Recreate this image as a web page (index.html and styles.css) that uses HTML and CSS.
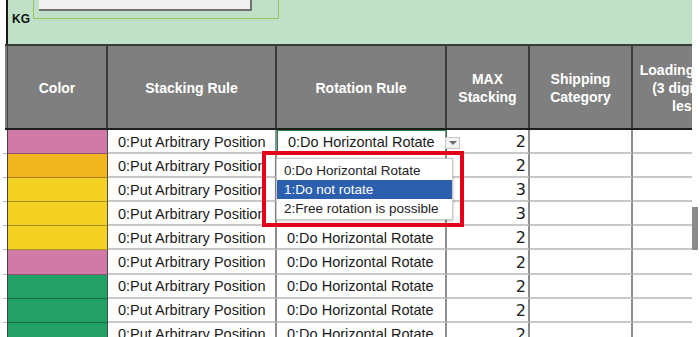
FILE: index.html
```html
<!DOCTYPE html>
<html lang="en">
  <head>
    <meta charset="UTF-8" />
    <meta name="viewport" content="width=device-width, initial-scale=1.0" />
    <title>Packing master</title>
    <link rel="stylesheet" href="styles.css">
  </head>
  <body>
    <div class="sheet">
      <!-- Верхняя строка с единицей веса -->
      <div class="band">
        <span class="unit">KG</span>
        <div class="frame"><div class="frame-inner"></div></div>
      </div>

      <!-- Заголовок таблицы -->
      <div class="row head">
        <div class="gut"></div>
        <div class="th">Color</div>
        <div class="th">Stacking Rule</div>
        <div class="th">Rotation Rule</div>
        <div class="th">MAX<br>Stacking</div>
        <div class="th">Shipping<br>Category</div>
        <div class="th">Loading Order<br>(3 digits or<br>less)</div>
      </div>

      <!-- Строки -->
      <div class="row body">
        <div class="gut"></div>
        <div class="swatch pink"></div>
        <div class="txt">0:Put Arbitrary Position</div>
        <div class="txt sel">
          0:Do Horizontal Rotate
          <span class="drop-btn"></span>
          <div class="callout"></div>
          <ul class="menu">
            <li>0:Do Horizontal Rotate</li>
            <li class="on">1:Do not rotate</li>
            <li>2:Free rotation is possible</li>
          </ul>
        </div>
        <div class="num">2</div>
        <div></div>
        <div></div>
      </div>
      <div class="row body">
        <div class="gut"></div>
        <div class="swatch orange"></div>
        <div class="txt">0:Put Arbitrary Position</div>
        <div class="txt">0:Do Horizontal Rotate</div>
        <div class="num">2</div>
        <div></div>
        <div></div>
      </div>
      <div class="row body">
        <div class="gut"></div>
        <div class="swatch yellow"></div>
        <div class="txt">0:Put Arbitrary Position</div>
        <div class="txt">0:Do Horizontal Rotate</div>
        <div class="num">3</div>
        <div></div>
        <div></div>
      </div>
      <div class="row body">
        <div class="gut"></div>
        <div class="swatch yellow"></div>
        <div class="txt">0:Put Arbitrary Position</div>
        <div class="txt">0:Do Horizontal Rotate</div>
        <div class="num">3</div>
        <div></div>
        <div></div>
      </div>
      <div class="row body">
        <div class="gut"></div>
        <div class="swatch yellow"></div>
        <div class="txt">0:Put Arbitrary Position</div>
        <div class="txt">0:Do Horizontal Rotate</div>
        <div class="num">2</div>
        <div></div>
        <div></div>
      </div>
      <div class="row body">
        <div class="gut"></div>
        <div class="swatch pink"></div>
        <div class="txt">0:Put Arbitrary Position</div>
        <div class="txt">0:Do Horizontal Rotate</div>
        <div class="num">2</div>
        <div></div>
        <div></div>
      </div>
      <div class="row body">
        <div class="gut"></div>
        <div class="swatch green"></div>
        <div class="txt">0:Put Arbitrary Position</div>
        <div class="txt">0:Do Horizontal Rotate</div>
        <div class="num">2</div>
        <div></div>
        <div></div>
      </div>
      <div class="row body">
        <div class="gut"></div>
        <div class="swatch green"></div>
        <div class="txt">0:Put Arbitrary Position</div>
        <div class="txt">0:Do Horizontal Rotate</div>
        <div class="num">2</div>
        <div></div>
        <div></div>
      </div>
      <div class="row body">
        <div class="gut"></div>
        <div class="swatch green"></div>
        <div class="txt">0:Put Arbitrary Position</div>
        <div class="txt">0:Do Horizontal Rotate</div>
        <div class="num">2</div>
        <div></div>
        <div></div>
      </div>
    </div>

    <div class="scrollbar"></div>
  </body>
</html>
```

FILE: styles.css
```css
/* Общие стили */
* {
  box-sizing: border-box;
}

body {
  margin: 0;
  width: 700px;
  height: 337px;
  overflow: hidden;
  position: relative;
  background-color: #fff;
  font-family: "Liberation Sans", Arial, sans-serif;
  color: #1a1a1a;
}

.sheet {
  width: 692px;
  height: 337px;
  overflow: hidden;
}

/* Зелёная полоса сверху */
.band {
  height: 44px;
  margin-left: 6px;
  border-left: 2px solid #1a1a1a;
  background-color: #c0e1c8;
  display: flex;
  align-items: flex-start;
  padding-left: 4px;
}

.unit {
  font-size: 12px;
  font-weight: bold;
  line-height: 12px;
  margin-top: 13px;
  color: #111;
}

.frame {
  width: 246px;
  height: 39px;
  margin: -20px 0 0 3px;
  border: 1.5px solid #9fc25c;
  padding-left: 5px;
}

.frame-inner {
  width: 213px;
  height: 29.5px;
  background-color: #f0f0f0;
  border-right: 2px solid #707070;
  border-bottom: 2px solid #707070;
}

/* Сетка таблицы */
.row {
  display: grid;
  grid-template-columns: 8px 100px 169px 170px 83px 103px 112px;
  width: 745px;
}

.head {
  height: 86px;
  margin-left: 5px;
  grid-template-columns: 3px 100px 169px 170px 83px 103px 112px;
  background-color: #7f7f7f;
  border-top: 2px solid #3b3b3b;
  border-bottom: 2px solid #1e1e1e;
  color: #fff;
  font-weight: bold;
  font-size: 14px;
  line-height: 18px;
}

.head .gut {
  border-right: 1px solid #444;
}

.head .th {
  display: flex;
  align-items: center;
  justify-content: center;
  text-align: center;
  white-space: nowrap;
  padding-top: 2px;
  border-right: 2px solid #3b3b3b;
}

.body {
  height: 24.1px;
}

.body > div {
  border-right: 2px solid #8e8e8e;
  border-bottom: 2px solid #c8c8c8;
}

.body > .gut {
  border-right: 1.5px solid #444;
  border-bottom: none;
  background: linear-gradient(#bdbdbd, #bdbdbd) no-repeat right bottom / 4px 1px;
}

.body > .swatch {
  border-right: 1.5px solid #4a4a4a;
  border-bottom: 1px solid rgba(0, 0, 0, 0.3);
}

.pink { background-color: #cf7aa7; }
.orange { background-color: #f1b520; }
.yellow { background-color: #f4d122; }
.green { background-color: #23a066; }

.txt {
  display: flex;
  align-items: center;
  padding: 1px 0 0 10px;
  font-size: 14.5px;
  white-space: nowrap;
}

.num {
  display: flex;
  align-items: center;
  justify-content: flex-end;
  padding: 1px 2px 0 0;
  font-family: "DejaVu Sans", sans-serif;
  font-size: 16px;
}

/* Выделенная ячейка с выпадающим списком */
.sel {
  position: relative;
  padding-left: 11px;
  outline: 1px solid #23804a;
  outline-offset: -1px;
}

.drop-btn {
  position: absolute;
  left: 100%;
  top: 7px;
  width: 15px;
  height: 12px;
  background-color: #f3f3f3;
  border: 1px solid #c6c6c6;
}

.drop-btn::after {
  content: "";
  position: absolute;
  left: 3px;
  top: 3px;
  border-left: 4px solid transparent;
  border-right: 4px solid transparent;
  border-top: 4px solid #6c6c6c;
}

.menu {
  position: absolute;
  left: -1px;
  top: 28px;
  width: 177px;
  margin: 0;
  padding: 2px 0 1px;
  list-style: none;
  background-color: #fff;
  border: 1px solid #c8c8c8;
  box-shadow: 0 1px 3px rgba(0, 0, 0, 0.25);
  font-size: 13.5px;
  color: #222;
}

.menu li {
  height: 19px;
  line-height: 19px;
  padding-left: 7px;
  white-space: nowrap;
}

.menu .on {
  background-color: #2c5fae;
  color: #fff;
}

.callout {
  position: absolute;
  left: -15px;
  top: 21px;
  width: 202px;
  height: 76px;
  border: 4.5px solid #e50019;
}

.scrollbar {
  position: absolute;
  left: 692px;
  top: 207px;
  width: 6px;
  height: 43px;
  background-color: #8a8a8a;
}
```
